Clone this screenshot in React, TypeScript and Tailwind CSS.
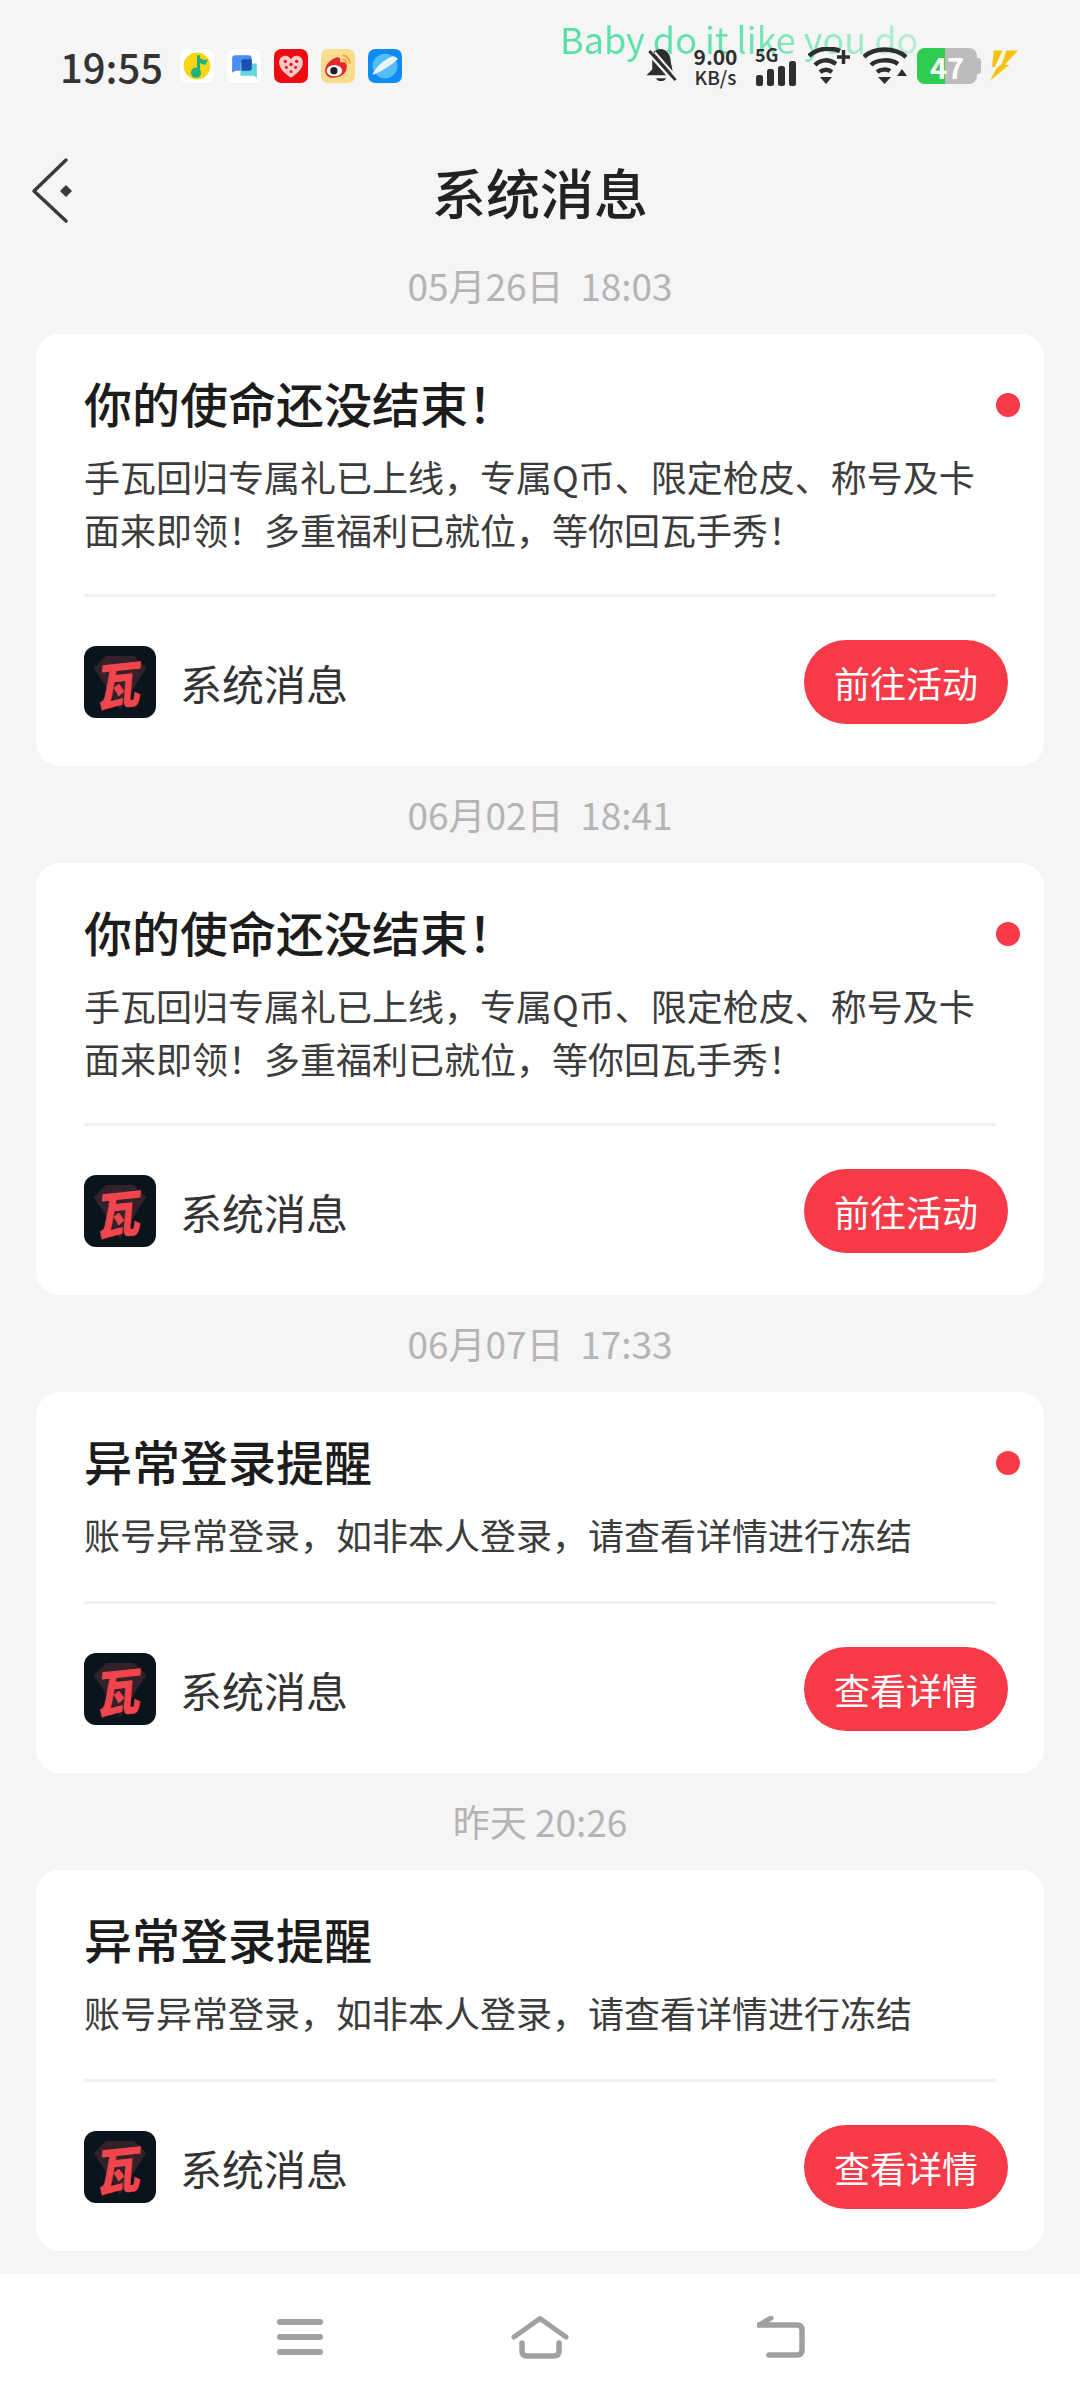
import React from 'react';

const cjk = "font-['Noto_Sans_CJK_SC','Noto_Sans',sans-serif]";

const MusicIcon = () => (
  <svg width="34" height="34" viewBox="0 0 33 33">
    <rect width="33" height="33" rx="7" fill="#fff" />
    <circle cx="16.5" cy="16.5" r="13" fill="#fbd514" />
    <path d="M18 6 L18 23" stroke="#1fb37c" strokeWidth="3" />
    <path d="M18 6 C20 11 24 11 27 10 L25 15 C22 16 20 14 18 12 Z" fill="#1fb37c" />
    <circle cx="15.5" cy="23" r="5" fill="#1fb37c" />
  </svg>
);

const ChatIcon = () => (
  <svg width="34" height="34" viewBox="0 0 33 33">
    <rect width="33" height="33" rx="7" fill="#fff" />
    <path d="M5 9 Q5 6 8 6 L21 6 Q24 6 24 9 L24 19 Q24 21 21 21 L8 21 L5 23 Z" fill="#4a8cf0" />
    <path d="M13 14 L29 14 L29 28 L26 26 L13 26 Z" fill="#5fd6dc" />
    <path d="M14 12 Q14 10 16 10 L24 10 L24 19 Q24 21 21 21 L14 21 Z" fill="#1c4fb0" />
  </svg>
);

const HeartIcon = () => (
  <svg width="34" height="34" viewBox="0 0 33 33">
    <rect width="33" height="33" rx="7" fill="#ee0a12" />
    <path d="M16.5 28 C10 23 5 19 5 13 C5 9 8 6.5 11 6.5 C13.5 6.5 15.5 8 16.5 10 C17.5 8 19.5 6.5 22 6.5 C25 6.5 28 9 28 13 C28 19 23 23 16.5 28 Z" fill="#f6c9c9" />
    <g fill="#ee0a12">
      <circle cx="11" cy="12" r="1.6" /><circle cx="16.5" cy="15" r="1.6" /><circle cx="22" cy="12" r="1.6" />
      <circle cx="12" cy="18" r="1.4" /><circle cx="21" cy="18" r="1.4" /><circle cx="16.5" cy="22" r="1.4" />
    </g>
  </svg>
);

const WeiboIcon = () => (
  <svg width="34" height="34" viewBox="0 0 33 33">
    <rect width="33" height="33" rx="7" fill="#fbdc8e" />
    <path d="M4 21 C4 14 11 9 16 8 C19 8 19 11 18.5 13 C23 12 26 14 25 18 C25 24 18 28 12 28 C7 28 4 25 4 21 Z" fill="#e6262c" />
    <ellipse cx="13" cy="21" rx="7.5" ry="5.5" fill="#fff" />
    <circle cx="12.5" cy="21" r="3.5" fill="#1c1c1c" />
    <path d="M21 6 A8 8 0 0 1 28 14 M21 10 A4 4 0 0 1 25 14" stroke="#eda02a" strokeWidth="1.6" fill="none" />
  </svg>
);

const PlanetIcon = () => (
  <svg width="34" height="34" viewBox="0 0 33 33">
    <rect width="33" height="33" rx="7" fill="#0f8cf2" />
    <circle cx="16.5" cy="16.5" r="12" fill="#55bdf5" />
    <path d="M4 24 C10 23 22 15 29 9 C28 7 26 6 24 6 C16 9 8 16 4 24 Z" fill="#e8f3fb" transform="translate(0 1)" />
  </svg>
);

const BellOff = () => (
  <svg width="33" height="37" viewBox="0 0 33 38" fill="#2e2e2e">
    <path d="M16 1 C9 2 7 8 7 13 L7 22 L1 28 L25 28 L27 26 L8 4 C10 3 13 1 16 1 Z" />
    <path d="M10 3 L28 24 L26 14 C26 8 23 2 16 1 C14 1 12 2 10 3 Z" />
    <path d="M11 31 L21 31 C20 35 12 35 11 31 Z" />
    <path d="M2 3 L31 35" stroke="#f5f5f5" strokeWidth="5" />
    <path d="M4 3 L31 33" stroke="#2e2e2e" strokeWidth="3" />
  </svg>
);

const Signal = () => (
  <svg width="41" height="25" viewBox="0 0 41 25" fill="#2e2e2e">
    <rect x="1" y="14" width="7" height="11" rx="2.5" />
    <rect x="12" y="8" width="7" height="17" rx="2.5" />
    <rect x="23" y="5" width="7" height="20" rx="2.5" />
    <rect x="34" y="0" width="7" height="25" rx="2.5" />
  </svg>
);

const WifiPlus = () => (
  <svg width="42" height="38" viewBox="0 0 42 38" fill="none" stroke="#2e2e2e" strokeWidth="4.5">
    <path d="M1 9 C9 1 23 0 32 4" />
    <path d="M7 18 C13 12 21 12 28 17" />
    <path d="M12 25 C16 22 20 22 24 25" />
    <path d="M12 30 L24 30 L18 37 Z" fill="#2e2e2e" stroke="none" />
    <path d="M29 10 L42 10 M35.5 3 L35.5 17" strokeWidth="3.5" />
  </svg>
);

const WifiUp = () => (
  <svg width="44" height="38" viewBox="0 0 44 38" fill="none" stroke="#2e2e2e" strokeWidth="4.5">
    <path d="M1 10 C11 0 32 0 43 10" />
    <path d="M8 18 C14 12 28 12 35 17" />
    <path d="M14 25 C18 22 24 22 27 24" />
    <path d="M15 30 L28 30 L21.5 37 Z" fill="#2e2e2e" stroke="none" />
    <path d="M34 29 L44 29 L39 22 Z" fill="#2e2e2e" stroke="none" />
  </svg>
);

const Bolt = () => (
  <svg width="29" height="32" viewBox="0 0 30 32" fill="#f7c20e">
    <path d="M4 0 L13 0 L5 17 L2 17 Z" />
    <path d="M17 0 L29 0 L15 15 L20 15 L0 31 L7 18 L12 14 Z" />
  </svg>
);

const Logo = () => (
  <div className="relative flex h-[72px] w-[72px] shrink-0 items-center justify-center rounded-[12px] bg-[#0a141c]">
    <svg className="absolute inset-0" width="72" height="72" viewBox="0 0 72 72">
      <path d="M10 22 L22 10 L50 10 L62 22 L36 64 Z" fill="#33222a" />
    </svg>
    <span className={`${cjk} relative -rotate-6 scale-y-[1.15] -skew-x-12 text-[44px] leading-none font-black text-[#f0454c]`}>瓦</span>
  </div>
);

type Msg = { stamp: string; title: string; lines: string[]; action: string; dot: boolean };

const messages: Msg[] = [
  {
    stamp: '05月26日  18:03',
    title: '你的使命还没结束！',
    lines: ['手瓦回归专属礼已上线，专属Q币、限定枪皮、称号及卡', '面来即领！多重福利已就位，等你回瓦手秀！'],
    action: '前往活动',
    dot: true,
  },
  {
    stamp: '06月02日  18:41',
    title: '你的使命还没结束！',
    lines: ['手瓦回归专属礼已上线，专属Q币、限定枪皮、称号及卡', '面来即领！多重福利已就位，等你回瓦手秀！'],
    action: '前往活动',
    dot: true,
  },
  {
    stamp: '06月07日  17:33',
    title: '异常登录提醒',
    lines: ['账号异常登录，如非本人登录，请查看详情进行冻结'],
    action: '查看详情',
    dot: true,
  },
  {
    stamp: '昨天 20:26',
    title: '异常登录提醒',
    lines: ['账号异常登录，如非本人登录，请查看详情进行冻结'],
    action: '查看详情',
    dot: false,
  },
];

const MessageCard = ({ msg }: { msg: Msg }) => (
  <>
    <div className="flex h-[97px] items-center justify-center pt-[1px] text-[37px] whitespace-pre text-[#b4b4b4]">{msg.stamp}</div>
    <div className="relative mx-[36px] rounded-[24px] bg-white pt-[38px] pr-[36px] pb-[42px] pl-[48px]">
      {msg.dot && <span className="absolute top-[59px] right-[24px] h-[24px] w-[24px] rounded-full bg-[#f73a48]" />}
      <div className="h-[60px] text-[48px] leading-[60px] font-medium text-[#1c1c1c]">{msg.title}</div>
      <div className={`mt-[18px] text-[36px] leading-[53px] text-[#3c3c3c] ${msg.lines.length > 1 ? 'pb-[38px]' : 'pb-[40px]'}`}>
        {msg.lines.map((line) => (
          <div key={line}>{line}</div>
        ))}
      </div>
      <div className="mr-[12px] h-[3px] bg-[#f0f0f2]" />
      <div className="mt-[43px] flex items-center">
        <Logo />
        <span className="ml-[24px] text-[42px] text-[#333]">系统消息</span>
        <button className="ml-auto h-[84px] w-[204px] rounded-full bg-[#f73a48] text-[36px] text-white">{msg.action}</button>
      </div>
    </div>
  </>
);

export default function App() {
  return (
    <div className={`${cjk} relative flex h-[2400px] w-[1080px] flex-col overflow-hidden bg-[#f5f5f5]`}>
      {/* status bar */}
      <div className="relative flex h-[132px] shrink-0 items-center pr-[61px] pl-[60px]">
        {/* floating lyric, painted under the icons */}
        <span className="absolute top-[14px] left-[560px] bg-gradient-to-r from-[#55e0a2] via-[#66e3ae] to-[#b9efd5] bg-clip-text text-[36px] leading-[48px] whitespace-nowrap text-transparent">
          Baby do it like you do
        </span>
        <span className="relative w-[120px] text-[40px] font-medium text-[#333]">19:55</span>
        <div className="relative flex gap-[13px]">
          <MusicIcon />
          <ChatIcon />
          <HeartIcon />
          <WeiboIcon />
          <PlanetIcon />
        </div>
        <div className="relative ml-auto flex items-center">
          <BellOff />
          <div className="ml-[16px] flex w-[43px] flex-col items-center text-[#2e2e2e]">
            <span className="text-[21px] leading-[21px] font-bold">9.00</span>
            <span className="text-[19px] leading-[19px] font-medium">KB/s</span>
          </div>
          <div className="ml-[18px] flex flex-col items-start">
            <span className="text-[18px] leading-[14px] font-bold text-[#2e2e2e]">5G</span>
            <Signal />
          </div>
          <div className="ml-[12px]"><WifiPlus /></div>
          <div className="ml-[13px]"><WifiUp /></div>
          <div className="ml-[10px] flex items-center">
            <div className="relative flex h-[36px] w-[60px] overflow-hidden rounded-[8px] bg-[#bcbcbc]">
              <div className="h-full w-[28px] bg-[#2ecc4f]" />
              <span className="absolute inset-0 flex items-center justify-center text-[29px] leading-none font-bold text-white">47</span>
            </div>
            <div className="h-[16px] w-[4px] rounded-r-[3px] bg-[#bcbcbc]" />
          </div>
          <div className="ml-[9px]"><Bolt /></div>
        </div>
      </div>

      {/* header */}
      <div className="relative flex h-[105px] shrink-0 items-center justify-center pt-[13px]">
        <svg className="absolute top-[23px] left-[30px]" width="44" height="70" viewBox="0 0 44 70" fill="none">
          <path d="M36 5 L4 36 L36 66" stroke="#3a3a3a" strokeWidth="3.5" strokeLinecap="round" strokeLinejoin="round" />
          <path d="M36 30 L42 36 L36 42 L30 36 Z" fill="#3a3a3a" />
        </svg>
        <span className="text-[54px] font-medium text-[#222]">系统消息</span>
      </div>

      {/* list */}
      <div className="flex-1">
        {messages.map((msg) => (
          <MessageCard key={msg.stamp} msg={msg} />
        ))}
      </div>

      {/* nav bar */}
      <div className="flex h-[126px] shrink-0 items-start gap-[188px] bg-white pt-[42px] pl-[277px]">
        <svg width="46" height="44" viewBox="0 0 46 44" stroke="#a0a0a0" strokeWidth="6" strokeLinecap="round">
          <path d="M3 6 L43 6 M3 21 L43 21 M3 36 L43 36" />
        </svg>
        <svg width="58" height="44" viewBox="0 0 58 44" fill="none" stroke="#a0a0a0" strokeLinecap="round" strokeLinejoin="round">
          <path d="M3 21 L29 2.5 L55 21" strokeWidth="5" />
          <path d="M11 27 L11 35 Q11 40 16 40 L43 40 Q48 40 48 35 L48 27" strokeWidth="5.5" />
        </svg>
        <svg width="48" height="42" viewBox="0 0 48 42" fill="none" stroke="#a0a0a0" strokeLinecap="round" strokeLinejoin="round">
          <path d="M2 9 L14 2" strokeWidth="5" />
          <path d="M2 9 L40 9 Q45 9 45 14 L45 34 Q45 39 40 39 L12 39" strokeWidth="5.5" />
        </svg>
      </div>
    </div>
  );
}
